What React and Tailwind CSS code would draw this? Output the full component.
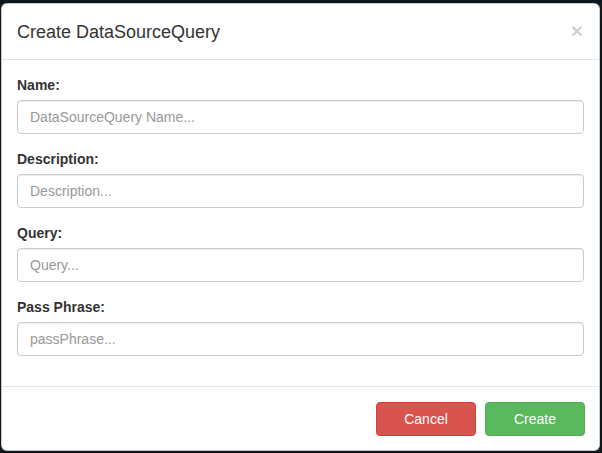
export default function App() {
  const fields = [
    { label: 'Name:', placeholder: 'DataSourceQuery Name...' },
    { label: 'Description:', placeholder: 'Description...' },
    { label: 'Query:', placeholder: 'Query...' },
    { label: 'Pass Phrase:', placeholder: 'passPhrase...' },
  ]

  return (
    <div className="w-[602px] h-[453px] overflow-hidden bg-[#171b1f] font-['Liberation_Sans',Arial,sans-serif] text-[#333]">
      <div className="h-[3px] bg-[#0b1823]" />
      <div className="ml-[1px] w-[599px] bg-white rounded-[6px] border border-black/20 shadow-[0_5px_15px_rgba(0,0,0,0.5)] overflow-hidden">
        <div className="flex items-start justify-between px-[15px] pt-[15px] pb-[14px] border-b border-[#e5e5e5]">
          <h4 className="text-[18px] leading-[26px] text-[#333]">Create DataSourceQuery</h4>
          <button className="text-[21px] leading-[21px] font-bold text-black/20 mt-[1px] mr-[1px]">×</button>
        </div>

        <div className="p-[15px]">
          {fields.map(f => (
            <div key={f.label} className="mb-[15px]">
              <label className="block text-[14px] leading-[20px] font-bold mb-[5px]">{f.label}</label>
              <input
                className="block w-full h-[34px] px-[12px] py-[6px] text-[14px] text-[#555] placeholder:text-[#999] border border-[#ccc] rounded-[4px] shadow-[inset_0_1px_1px_rgba(0,0,0,0.075)] outline-none"
                placeholder={f.placeholder}
              />
            </div>
          ))}
        </div>

        <div className="flex justify-end gap-[9px] px-[14px] pt-[15px] pb-[14px] border-t border-[#e5e5e5]">
          <button className="w-[100px] h-[34px] text-[14px] text-white bg-[#d9534f] border border-[#d43f3a] rounded-[4px]">Cancel</button>
          <button className="w-[100px] h-[34px] text-[14px] text-white bg-[#5cb85c] border border-[#4cae4c] rounded-[4px]">Create</button>
        </div>
      </div>
    </div>
  )
}
